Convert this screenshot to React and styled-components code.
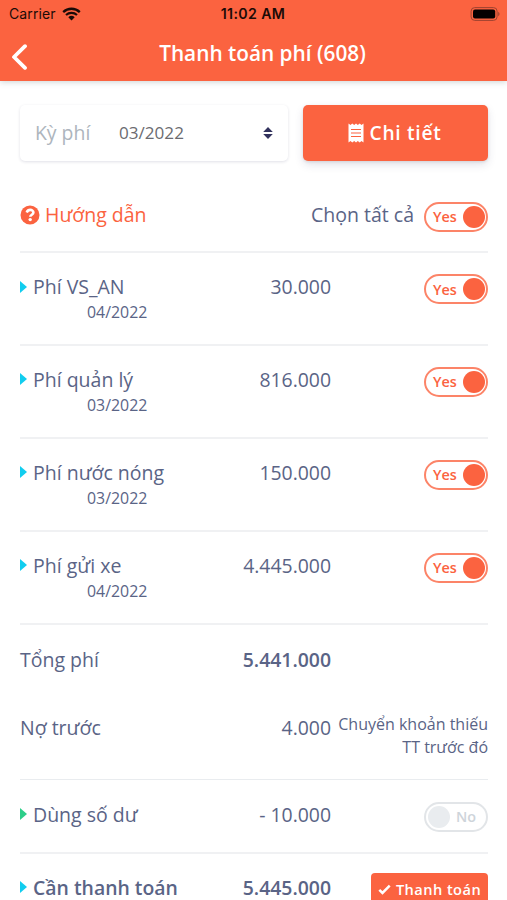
import React, { useState } from 'react';
import styled, { createGlobalStyle } from 'styled-components';

const PRIMARY = '#fb6340';
const TEXT = '#5a6486';
const INFO = '#11cdef';
const SUCCESS = '#2dce89';

const FEES = [
    { name: 'Phí VS_AN', period: '04/2022', amount: '30.000' },
    { name: 'Phí quản lý', period: '03/2022', amount: '816.000' },
    { name: 'Phí nước nóng', period: '03/2022', amount: '150.000' },
    { name: 'Phí gửi xe', period: '04/2022', amount: '4.445.000' },
];

const GlobalStyle = createGlobalStyle`
    * {
        box-sizing: border-box;
    }

    body {
        margin: 0;
        overflow: hidden;
        background: #fff;
        font-family: 'Open Sans', sans-serif;
        color: ${TEXT};
    }
`;

const Screen = styled.div`
    width: 507px;
    height: 900px;
    overflow: hidden;
`;

const Header = styled.header`
    height: 81px;
    background: ${PRIMARY};
    box-shadow: 0 1px 6px rgba(60, 80, 80, 0.25);
`;

const StatusBar = styled.div`
    display: grid;
    grid-template-columns: 1fr auto 1fr;
    align-items: center;
    height: 27px;
    padding: 0 7px 0 9px;
    font-family: Inter, sans-serif;
    font-size: 14px;
    color: #1b0b07;
`;

const Carrier = styled.div`
    display: flex;
    align-items: center;
    gap: 6px;
    letter-spacing: 0.1px;
`;

const Time = styled.div`
    font-weight: 600;
    font-size: 14.2px;
    letter-spacing: 0.35px;
    margin-left: -3px;
`;

const BatteryIcon = styled.svg`
    justify-self: end;
`;

const NavBar = styled.div`
    display: grid;
    grid-template-columns: 40px 1fr 24px;
    align-items: center;
    height: 54px;
    padding: 0 9px 0 11px;
`;

const BackButton = styled.button`
    display: flex;
    padding: 6px 0 0;
    border: 0;
    background: none;
`;

const Title = styled.h1`
    margin: 0;
    padding-bottom: 2px;
    font-size: 20.8px;
    font-weight: 600;
    line-height: 28px;
    text-align: center;
    white-space: nowrap;
    color: #fff;
`;

const Content = styled.main`
    padding: 24px 19px 0 20px;
`;

const Filters = styled.div`
    display: flex;
    gap: 15px;
    height: 56px;
`;

const PeriodSelect = styled.div`
    display: flex;
    align-items: center;
    width: 268px;
    padding: 0 15px;
    border-radius: 5px;
    box-shadow: 0 1px 3px rgba(50, 50, 93, 0.15);
`;

const PeriodLabel = styled.span`
    width: 84px;
    padding-bottom: 1px;
    font-size: 19.4px;
    color: #adb5bd;
`;

const PeriodValue = styled.span`
    flex: 1;
    padding-bottom: 2px;
    font-size: 17.1px;
    color: #6b6b70;
`;

const DetailButton = styled.button`
    display: flex;
    align-items: center;
    justify-content: center;
    gap: 6px;
    width: 185px;
    padding: 0 2px 1px 0;
    border: 0;
    border-radius: 5px;
    background: ${PRIMARY};
    box-shadow: 0 4px 8px rgba(50, 50, 93, 0.13), 0 1px 3px rgba(0, 0, 0, 0.1);
    font-family: inherit;
    font-size: 19.2px;
    font-weight: 600;
    letter-spacing: 0.7px;
    color: #fff;
`;

const SelectAll = styled.div`
    display: flex;
    align-items: center;
    justify-content: space-between;
    height: 90px;
    padding-top: 21px;
    font-size: 19.4px;
`;

const Guide = styled.a`
    display: flex;
    align-items: center;
    gap: 5px;
    padding-bottom: 4px;
    font-size: 19.5px;
    color: ${PRIMARY};
`;

const SelectAllControl = styled.div`
    display: flex;
    align-items: center;
    gap: 10px;
`;

const SelectAllLabel = styled.span`
    padding-bottom: 4px;
    font-size: 19.5px;
`;

const Row = styled.div`
    display: grid;
    grid-template-columns: 150px 161px 1fr;
    height: ${p => p.$height}px;
    padding-top: ${p => p.$top || 20}px;
    border-top: ${p => (p.$border ? `${p.$border}px solid ${p.$border > 1 ? '#f0f1f3' : '#e9ecef'}` : '0')};
    font-size: 19.4px;
    font-weight: ${p => (p.$strong ? 600 : 400)};
    line-height: ${p => (p.$strong ? 27 : 29)}px;
    white-space: nowrap;
`;

const Name = styled.div`
    display: flex;
    align-items: center;
    height: ${p => (p.$strong ? 27 : 29)}px;
    font-size: ${p => (p.$strong ? 19.4 : 19.5)}px;
`;

const Period = styled.div`
    padding-left: 67px;
    font-size: 15.9px;
    line-height: 23px;
`;

const Caret = styled.span`
    margin-right: 6px;
    border: solid transparent;
    border-width: 6px 0 6px 7px;
    border-left-color: ${p => p.$color};
`;

const Amount = styled.div`
    font-weight: ${p => (p.$strong ? 600 : 'inherit')};
    text-align: right;
`;

const Side = styled.div`
    display: flex;
    justify-content: flex-end;
    align-items: flex-start;
`;

const Note = styled.div`
    font-size: 16px;
    line-height: 23px;
    text-align: right;
`;

const Switch = styled.button`
    display: flex;
    flex-direction: ${p => (p.$on ? 'row' : 'row-reverse')};
    align-items: center;
    justify-content: space-between;
    width: 64px;
    height: 30px;
    margin-top: ${p => p.$offset || 0}px;
    padding: ${p => (p.$on ? '0 1px 0 7px' : '0 10px 0 2px')};
    border: 2px solid ${p => (p.$on ? '#fc8468' : '#e2e5e8')};
    border-radius: 15px;
    background: #fff;
    font-family: inherit;
    font-size: 14.4px;
    font-weight: 600;
    color: ${p => (p.$on ? PRIMARY : '#ced4da')};
`;

const Knob = styled.span`
    width: 22px;
    height: 22px;
    border-radius: 50%;
    background: ${p => (p.$on ? PRIMARY : '#e9ecef')};
`;

const PayButton = styled.button`
    display: flex;
    align-items: center;
    justify-content: center;
    gap: 5px;
    flex: none;
    width: 117px;
    height: 34px;
    margin-top: -1px;
    padding: 0 0 1px;
    border: 0;
    border-radius: 4px;
    background: ${PRIMARY};
    font-family: inherit;
    font-size: 14.6px;
    font-weight: 600;
    letter-spacing: 0.45px;
    color: #fff;
`;

const WifiIcon = () => (
    <svg width="19" height="14" viewBox="0 0 19 14">
        <path d="M1.2 5.1a12 12 0 0 1 16.6 0" fill="none" stroke="#1b0b07" strokeWidth="2.3" />
        <path d="M4 8.1a8 8 0 0 1 11 0" fill="none" stroke="#1b0b07" strokeWidth="2.1" />
        <path d="M6.3 10.3a4.8 4.8 0 0 1 6.4 0L9.5 13.6z" fill="#1b0b07" />
    </svg>
);

const Battery = () => (
    <BatteryIcon width="31" height="14" viewBox="0 0 31 14">
        <rect x="2.1" y="0.6" width="26" height="12.8" rx="3.6" fill="none" stroke="#9d4330" />
        <rect x="4" y="2.5" width="22.2" height="9" rx="2" fill="#050000" />
        <path d="M29.2 4.8c1.8 .8 1.8 3.6 0 4.4z" fill="#9d4330" />
    </BatteryIcon>
);

const BackIcon = () => (
    <svg width="17" height="26" viewBox="0 0 17 26">
        <path d="M14 2.2L3 13l11 10.8" fill="none" stroke="#fff" strokeWidth="3.8" strokeLinecap="round" strokeLinejoin="round" />
    </svg>
);

const SortIcon = () => (
    <svg width="10" height="12" viewBox="0 0 10 12">
        <path d="M5 0l4.8 5H.2zM5 12l4.8-5H.2z" fill="#32325d" />
    </svg>
);

const ReceiptIcon = () => (
    <svg width="16" height="20" viewBox="0 0 16 20">
        <path
            d="M.5.5l2 1.5L4.3.5l1.9 1.5L8 .5 9.8 2l1.9-1.5L13.5 2l2-1.5v19l-2-1.5-1.8 1.5L9.8 18 8 19.5 6.2 18l-1.9 1.5L2.5 18l-2 1.5z"
            fill="#fff"
        />
        <path d="M3 6.5h10M3 10h10M3 13.5h10" stroke={PRIMARY} strokeWidth="1.2" />
    </svg>
);

const HelpIcon = () => (
    <svg width="20" height="20" viewBox="0 0 20 20">
        <circle cx="10" cy="10" r="9.5" fill={PRIMARY} />
        <path d="M6.7 7.4C7.5 5.5 8.7 4.9 10.2 4.9c1.9 0 3.2 1.1 3.2 2.6 0 2.3-3.1 2.2-3.1 4.3" fill="none" stroke="#fff" strokeWidth="2.6" />
        <circle cx="10.2" cy="14.6" r="1.7" fill="#fff" />
    </svg>
);

const CheckIcon = () => (
    <svg width="13" height="11" viewBox="0 0 13 11">
        <path d="M1.3 5.8l3.2 3.2 7.2-7.3" fill="none" stroke="#fff" strokeWidth="2.5" />
    </svg>
);

const Toggle = ({ initial, offset }) => {
    const [on, setOn] = useState(initial);

    return (
        <Switch $on={on} $offset={offset} onClick={() => setOn(!on)}>
            {on ? 'Yes' : 'No'}
            <Knob $on={on} />
        </Switch>
    );
};

const FeeRow = ({ fee }) => (
    <Row $height={92.9} $border={2} $top={19}>
        <div>
            <Name>
                <Caret $color={INFO} />
                {fee.name}
            </Name>
            <Period>{fee.period}</Period>
        </div>
        <Amount>{fee.amount}</Amount>
        <Side>
            <Toggle initial offset={2} />
        </Side>
    </Row>
);

export default function App() {
    return (
        <Screen>
            <GlobalStyle />
            <Header>
                <StatusBar>
                    <Carrier>
                        Carrier
                        <WifiIcon />
                    </Carrier>
                    <Time>11:02 AM</Time>
                    <Battery />
                </StatusBar>
                <NavBar>
                    <BackButton>
                        <BackIcon />
                    </BackButton>
                    <Title>Thanh toán phí (608)</Title>
                </NavBar>
            </Header>
            <Content>
                <Filters>
                    <PeriodSelect>
                        <PeriodLabel>Kỳ phí</PeriodLabel>
                        <PeriodValue>03/2022</PeriodValue>
                        <SortIcon />
                    </PeriodSelect>
                    <DetailButton>
                        <ReceiptIcon />
                        Chi tiết
                    </DetailButton>
                </Filters>
                <SelectAll>
                    <Guide>
                        <HelpIcon />
                        Hướng dẫn
                    </Guide>
                    <SelectAllControl>
                        <SelectAllLabel>Chọn tất cả</SelectAllLabel>
                        <Toggle initial />
                    </SelectAllControl>
                </SelectAll>
                {FEES.map(fee => (
                    <FeeRow key={fee.name} fee={fee} />
                ))}
                <Row $height={76} $border={2}>
                    <Name>Tổng phí</Name>
                    <Amount $strong>5.441.000</Amount>
                </Row>
                <Row $height={80} $top={14}>
                    <Name>Nợ trước</Name>
                    <Amount>4.000</Amount>
                    <Note>
                        Chuyển khoản thiếu
                        <br />
                        TT trước đó
                    </Note>
                </Row>
                <Row $height={73} $border={1}>
                    <Name>
                        <Caret $color={SUCCESS} />
                        Dùng số dư
                    </Name>
                    <Amount>- 10.000</Amount>
                    <Side>
                        <Toggle initial={false} offset={2} />
                    </Side>
                </Row>
                <Row $height={73} $border={2} $strong>
                    <Name $strong>
                        <Caret $color={INFO} />
                        Cần thanh toán
                    </Name>
                    <Amount>5.445.000</Amount>
                    <Side>
                        <PayButton>
                            <CheckIcon />
                            Thanh toán
                        </PayButton>
                    </Side>
                </Row>
            </Content>
        </Screen>
    );
}
